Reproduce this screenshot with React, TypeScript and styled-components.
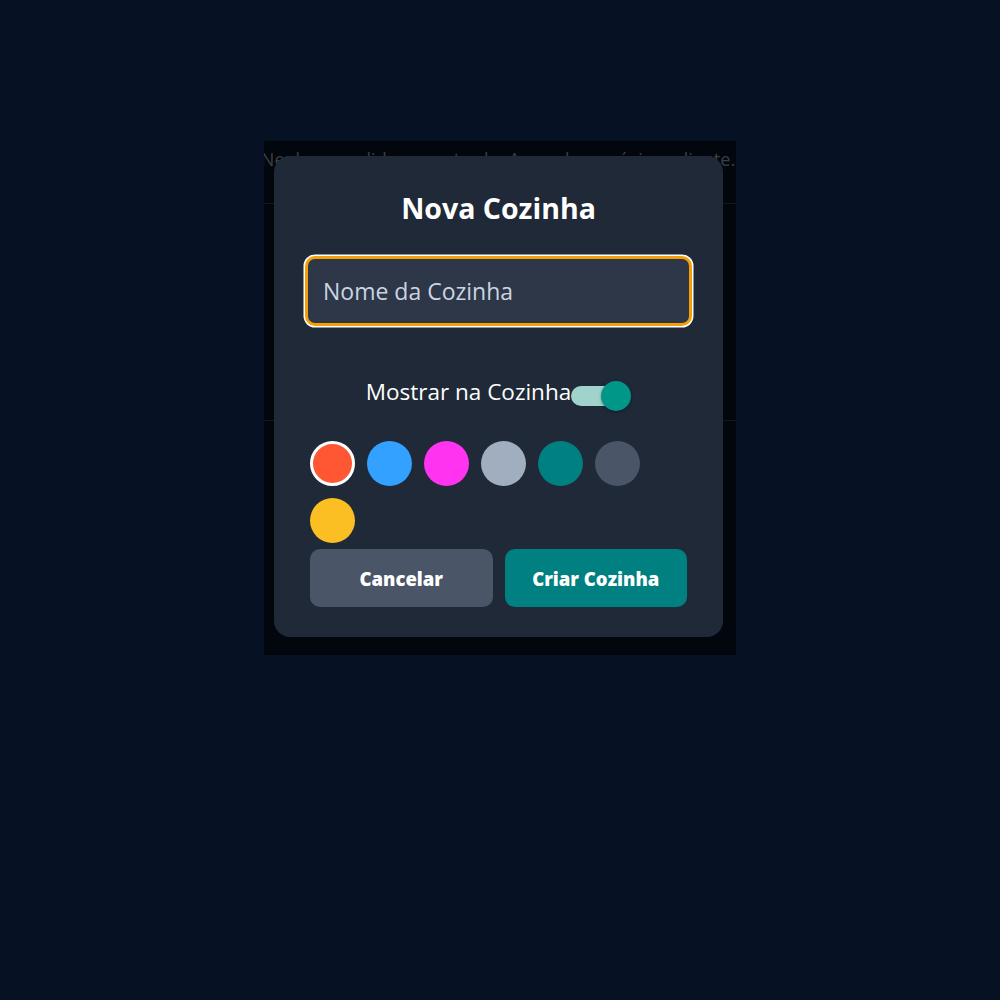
import React, { useState } from "react";
import styled, { createGlobalStyle } from "styled-components";

const GlobalStyle = createGlobalStyle`
  html, body {
    margin: 0;
    padding: 0;
    background: #061224;
    font-family: "Open Sans", "Liberation Sans", sans-serif;
  }
  * { box-sizing: border-box; }
`;

const Page = styled.div`
  min-height: 1000px;
  padding-top: 141px;
`;

const Stage = styled.div`
  position: relative;
  width: 472px;
  height: 514px;
  margin: 0 auto;
  overflow: hidden;
`;

const EmptyText = styled.p`
  margin: 0;
  padding-top: 6px;
  white-space: nowrap;
  text-align: center;
  margin-left: -4px;
  color: #9ca3af;
  font-size: 18px;
  line-height: 24px;
`;

const Panel = styled.div`
  margin-top: 32px;
  height: 218px;
  border-top: 1px solid #374151;
  border-bottom: 1px solid #374151;
`;

const Overlay = styled.div`
  position: absolute;
  inset: 0;
  background: rgba(0, 0, 0, 0.62);
  display: flex;
  align-items: flex-start;
  padding: 15px 13px 0 10px;
`;

const Modal = styled.div`
  width: 449px;
  height: 481px;
  background: #1f2937;
  border-radius: 16px;
  padding: 30px 30px 24px;
  display: flex;
  flex-direction: column;
`;

const Title = styled.h2`
  margin: 0 0 26px;
  text-align: center;
  color: #ffffff;
  font-size: 28.5px;
  line-height: 44px;
  font-weight: 700;
`;

const NameInput = styled.input`
  width: 387px;
  height: 70px;
  margin: 0 auto;
  display: block;
  border: 3px solid #f59e0b;
  box-shadow: 0 0 0 1.5px #ffffff;
  border-radius: 10px;
  background: #2d3748;
  color: #e2e8f0;
  font-family: inherit;
  font-size: 23px;
  padding: 0 15px;
  outline: none;

  &::placeholder {
    color: #cbd5e1;
  }
`;

const ToggleRow = styled.label`
  display: flex;
  justify-content: center;
  align-items: center;
  margin-top: 45px;
  height: 40px;
  color: #ffffff;
  font-size: 22.5px;
`;

const Switch = styled.span`
  position: relative;
  flex-shrink: 0;
  width: 60px;
  height: 30px;
  margin-top: 10px;
`;

const Track = styled.span<{ $on: boolean }>`
  position: absolute;
  left: 0;
  top: 5px;
  width: 50px;
  height: 20px;
  border-radius: 10px;
  background: ${(p) => (p.$on ? "#9fd3cb" : "#9ca3af")};
`;

const Thumb = styled.span<{ $on: boolean }>`
  position: absolute;
  top: 0;
  left: ${(p) => (p.$on ? "30px" : "0")};
  width: 30px;
  height: 30px;
  border-radius: 50%;
  background: ${(p) => (p.$on ? "#009688" : "#e5e7eb")};
  box-shadow: 0 1px 3px rgba(0, 0, 0, 0.35);
`;

const Swatches = styled.div`
  display: flex;
  flex-wrap: wrap;
  margin-top: 24px;
`;

const Swatch = styled.button<{ $color: string; $selected: boolean }>`
  width: 45px;
  height: 45px;
  margin: 6px;
  padding: 0;
  border-radius: 50%;
  background: ${(p) => p.$color};
  border: ${(p) => (p.$selected ? "3px solid #ffffff" : "none")};
  cursor: pointer;
`;

const Actions = styled.div`
  display: flex;
`;

const ActionButton = styled.button<{ $variant: "muted" | "primary" }>`
  flex: 1;
  height: 58px;
  margin: 0 6px;
  border: none;
  border-radius: 10px;
  background: ${(p) => (p.$variant === "primary" ? "#008080" : "#4a5568")};
  color: #ffffff;
  font-family: inherit;
  font-size: 18.5px;
  font-weight: 800;
  cursor: pointer;
`;

const colors = ["#ff5733", "#33a1ff", "#ff33f0", "#a0aec0", "#008080", "#4a5568", "#fbbf24"];

export default function App() {
  const [selected, setSelected] = useState(colors[0]);
  const [show, setShow] = useState(true);

  return (
    <Page>
      <GlobalStyle />
      <Stage>
        <EmptyText>Nenhum pedido encontrado. Aguarde o próximo cliente.</EmptyText>
        <Panel />
        <Overlay>
          <Modal>
            <Title>Nova Cozinha</Title>
            <NameInput placeholder="Nome da Cozinha" />
            <ToggleRow onClick={() => setShow(!show)}>
              Mostrar na Cozinha
              <Switch>
                <Track $on={show} />
                <Thumb $on={show} />
              </Switch>
            </ToggleRow>
            <Swatches>
              {colors.map((c) => (
                <Swatch key={c} $color={c} $selected={c === selected} onClick={() => setSelected(c)} />
              ))}
            </Swatches>
            <Actions>
              <ActionButton $variant="muted">Cancelar</ActionButton>
              <ActionButton $variant="primary">Criar Cozinha</ActionButton>
            </Actions>
          </Modal>
        </Overlay>
      </Stage>
    </Page>
  );
}
